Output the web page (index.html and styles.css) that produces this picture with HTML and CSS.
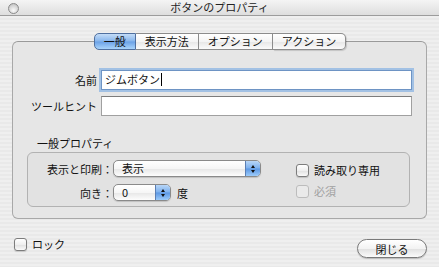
FILE: index.html
```html
<!DOCTYPE html>
<html lang="ja">
<head>
    <meta charset="UTF-8">
    <title>ボタンのプロパティ</title>
    <link rel="stylesheet" href="styles.css">
</head>
<body>
    <div class="window">
        <div class="titlebar">
            <span class="close-btn"></span>
            <span class="title">ボタンのプロパティ</span>
        </div>

        <div class="content">
            <div class="tabs">
                <span class="tab active">一般</span>
                <span class="tab">表示方法</span>
                <span class="tab">オプション</span>
                <span class="tab">アクション</span>
            </div>

            <div class="panel">
                <div class="form-row">
                    <label class="form-label">名前</label>
                    <div class="field focused">ジムボタン<span class="caret"></span></div>
                </div>
                <div class="form-row">
                    <label class="form-label">ツールヒント</label>
                    <div class="field"></div>
                </div>

                <div class="group-title">一般プロパティ</div>
                <div class="group">
                    <div class="group-left">
                        <div class="group-row">
                            <span class="group-label">表示と印刷：</span>
                            <div class="popup wide">
                                <span class="popup-value">表示</span>
                                <span class="popup-arrows"><i class="up"></i><i class="down"></i></span>
                            </div>
                        </div>
                        <div class="group-row">
                            <span class="group-label">向き：</span>
                            <div class="popup narrow">
                                <span class="popup-value">0</span>
                                <span class="popup-arrows"><i class="up"></i><i class="down"></i></span>
                            </div>
                            <span class="unit">度</span>
                        </div>
                    </div>
                    <div class="group-right">
                        <label class="check"><span class="box"></span>読み取り専用</label>
                        <label class="check disabled"><span class="box"></span>必須</label>
                    </div>
                </div>
            </div>

            <div class="footer">
                <label class="check"><span class="box"></span>ロック</label>
                <button class="close-button">閉じる</button>
            </div>
        </div>
    </div>
</body>
</html>
```

FILE: styles.css
```css
* {
    margin: 0;
    padding: 0;
    box-sizing: border-box;
}

body {
    width: 439px;
    height: 267px;
    overflow: hidden;
    font-family: "Noto Sans CJK JP", "Noto Sans", sans-serif;
    font-size: 11px;
    color: #111;
    background: repeating-linear-gradient(to bottom, #efefef 0 2px, #e9e9e9 2px 4px);
}

.window {
    height: 267px;
}

/* title bar */
.titlebar {
    height: 16px;
    display: flex;
    align-items: center;
    justify-content: center;
    position: relative;
    background: linear-gradient(to bottom, #f4f4f4 0%, #dedede 100%);
    border-bottom: 1px solid #9c9c9c;
}

.close-btn {
    position: absolute;
    left: 8px;
    top: 3px;
    width: 11px;
    height: 11px;
    border-radius: 50%;
    border: 1px solid #8a8a8a;
    background: radial-gradient(circle at 50% 70%, #fafafa 0%, #d4d4d4 60%, #b4b4b4 100%);
}

.title {
    font-size: 11px;
    line-height: 15px;
    color: #222;
}

/* content */
.content {
    padding: 17px 12px 0 12px;
}

.tabs {
    display: flex;
    justify-content: center;
    position: relative;
    z-index: 1;
    margin-bottom: -9px;
    padding-left: 1px;
}

.tab {
    height: 17px;
    line-height: 15px;
    padding: 0 9px;
    border: 1px solid #8c8c8c;
    border-left: none;
    background: linear-gradient(to bottom, #ffffff 0%, #f4f4f4 50%, #e6e6e6 51%, #fbfbfb 100%);
    color: #111;
}

.tab:first-child {
    border-left: 1px solid #5577aa;
    border-radius: 5px 0 0 5px;
}

.tab:last-child {
    border-radius: 0 5px 5px 0;
    box-shadow: 1px 1px 1px rgba(0, 0, 0, 0.15);
}

.tab.active {
    border-color: #4f6f9f;
    padding: 0 9px 0 9px;
    background: linear-gradient(to bottom, #c4dcf7 0%, #86b5ec 48%, #6ba1e6 52%, #a9d4fb 100%);
}

/* tab panel */
.panel {
    height: 178px;
    border: 1px solid #a8a8a8;
    border-top-color: #9a9a9a;
    border-radius: 6px;
    background: #e6e6e6;
    padding: 28px 14px 0 14px;
}

.form-row {
    display: flex;
    align-items: center;
    margin-bottom: 6px;
}

.form-label {
    width: 70px;
    text-align: right;
    margin-right: 4px;
}

.field {
    flex: 1;
    height: 20px;
    background: #fff;
    border: 1px solid #a0a0a0;
    border-top-color: #7c7c7c;
    line-height: 17px;
    padding-left: 3px;
}

.field.focused {
    border-color: #6e94c4;
    box-shadow: 0 0 0 2px #a2c1e4;
}

.caret {
    display: inline-block;
    width: 1px;
    height: 13px;
    background: #000;
    vertical-align: -2px;
    margin-left: 1px;
}

/* group box */
.group-title {
    margin: 19px 0 1px 10px;
    line-height: 16px;
}

.group {
    display: flex;
    height: 55px;
    margin-right: 2px;
    border: 1px solid #b2b2b2;
    border-radius: 6px;
    background: #e2e2e2;
    padding-top: 7px;
}

.group-left {
    width: 268px;
}

.group-row {
    display: flex;
    align-items: center;
    height: 17px;
    margin-bottom: 7px;
}

.group-label {
    width: 85px;
    text-align: right;
}

.popup {
    height: 17px;
    display: flex;
    border: 1px solid #8a8a8a;
    border-radius: 5px;
    background: linear-gradient(to bottom, #ffffff 0%, #f6f6f6 50%, #e8e8e8 55%, #fdfdfd 100%);
    box-shadow: 0 1px 1px rgba(0, 0, 0, 0.15);
    overflow: hidden;
}

.popup.wide {
    width: 148px;
}

.popup.narrow {
    width: 58px;
}

.popup-value {
    flex: 1;
    line-height: 15px;
    padding-left: 8px;
}

.popup-arrows {
    width: 15px;
    border-left: 1px solid #5b7fb4;
    background: linear-gradient(to bottom, #b8d6f7 0%, #7cb0ee 48%, #5c97e3 52%, #9ccbfa 100%);
    display: flex;
    flex-direction: column;
    align-items: center;
    justify-content: center;
    gap: 2px;
}

.popup-arrows i {
    width: 0;
    height: 0;
    border-left: 2.5px solid transparent;
    border-right: 2.5px solid transparent;
}

.popup-arrows .up {
    border-bottom: 3px solid #111;
}

.popup-arrows .down {
    border-top: 3px solid #111;
}

.unit {
    margin-left: 6px;
}

.group-right {
    padding-top: 3px;
}

.check {
    display: flex;
    align-items: center;
    height: 14px;
    margin-bottom: 7px;
}

.box {
    width: 13px;
    height: 13px;
    margin-right: 5px;
    border: 1px solid #7c7c7c;
    border-radius: 3px;
    background: linear-gradient(to bottom, #ffffff 0%, #efefef 50%, #e2e2e2 55%, #fafafa 100%);
    box-shadow: 0 1px 1px rgba(0, 0, 0, 0.15);
}

.check.disabled {
    color: #a0a0a0;
}

.check.disabled .box {
    border-color: #bcbcbc;
    box-shadow: none;
    background: #eaeaea;
}

/* footer */
.footer {
    display: flex;
    align-items: flex-start;
    justify-content: space-between;
    margin-top: 18px;
    padding-left: 2px;
}

.footer .check {
    margin-bottom: 0;
}

.close-button {
    width: 70px;
    height: 19px;
    margin-top: 2px;
    font-family: inherit;
    font-size: 11px;
    color: #111;
    border: 1px solid #7a7a7a;
    border-radius: 10px;
    background: linear-gradient(to bottom, #ffffff 0%, #f3f3f3 50%, #e2e2e2 55%, #fbfbfb 100%);
    box-shadow: 0 1px 1px rgba(0, 0, 0, 0.2);
}
```
